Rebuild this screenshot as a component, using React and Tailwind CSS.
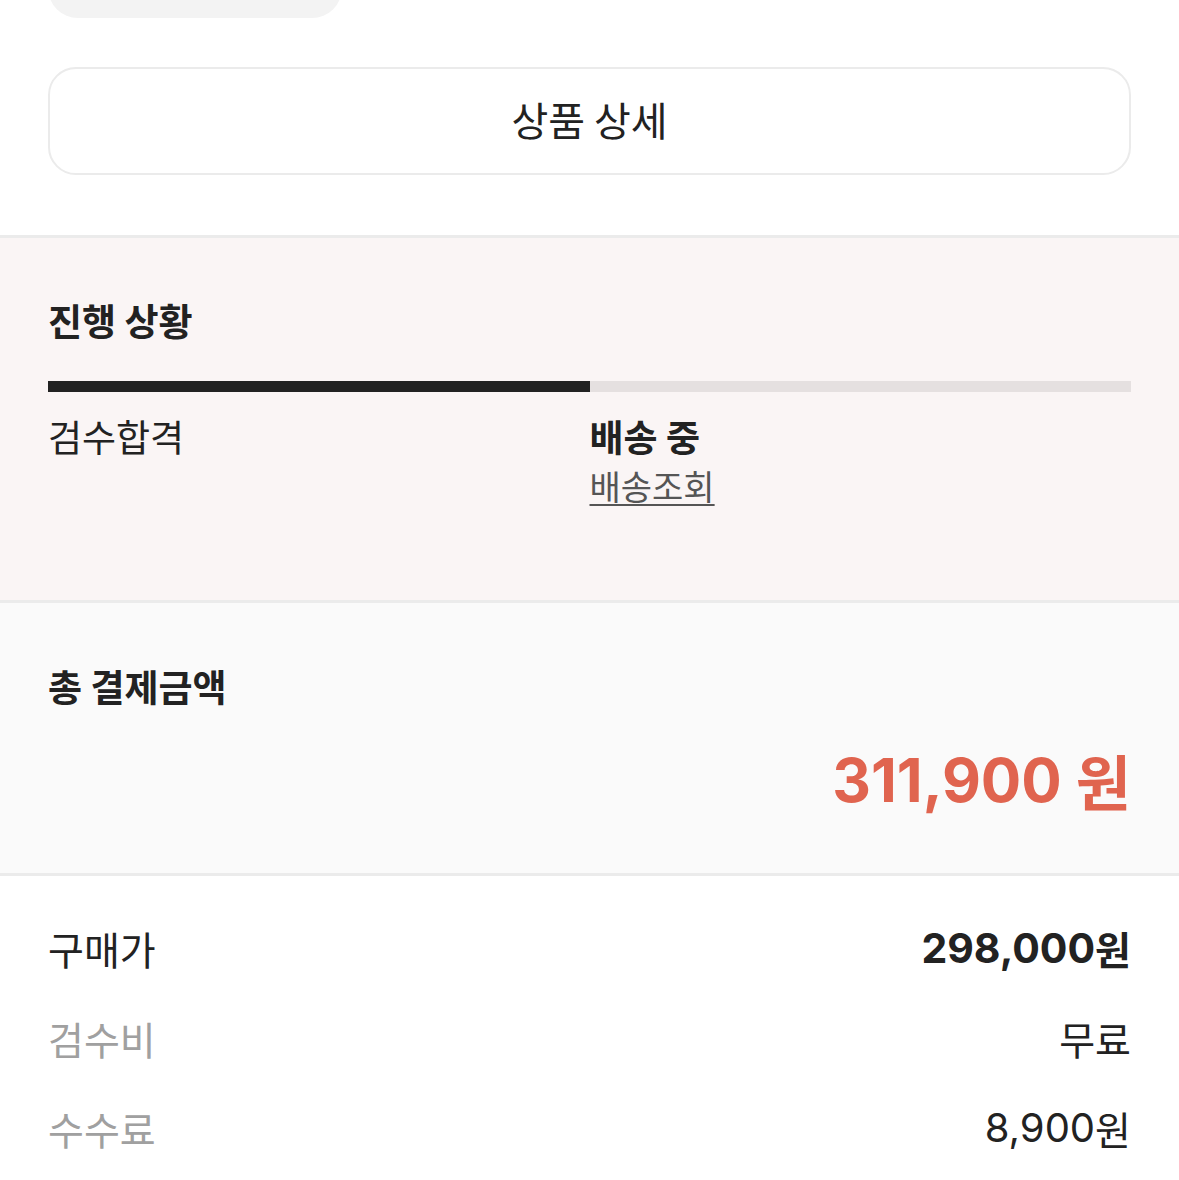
const NUM = { fontFamily: 'Inter, "Noto Sans CJK KR", sans-serif' };

export default function App() {
  return (
    <div
      className="min-h-screen bg-white text-[#222222]"
      style={{ fontFamily: '"Noto Sans CJK KR", "Noto Sans", sans-serif' }}
    >
      {/* TOP PILL (cut off) */}
      <div className="px-12 h-[18px] overflow-hidden flex items-end">
        <div className="w-[294px] h-[60px] shrink-0 rounded-b-[30px] bg-[#f3f3f3]" />
      </div>

      {/* PRODUCT DETAIL BUTTON */}
      <div className="px-12 pt-[49px] pb-[60px]">
        <button className="w-full h-[108px] pb-1 rounded-[28px] border-2 border-[#ebebeb] bg-white text-[40px] text-[#222222]">
          상품 상세
        </button>
      </div>

      {/* PROGRESS */}
      <section className="border-t-[3px] border-[#ebebeb] bg-[#faf5f5] px-12 pt-[58px] pb-[90px]">
        <h2 className="text-[37px] leading-[48px] font-bold">진행 상황</h2>
        <div className="mt-[37px] flex h-[11px]">
          <div className="w-1/2 bg-[#222222]" />
          <div className="w-1/2 bg-[#e5e0e0]" />
        </div>
        <div className="mt-5 flex text-[37px] leading-[49px]">
          <div className="w-1/2">검수합격</div>
          <div className="w-1/2">
            <p className="font-bold">배송 중</p>
            <a className="block h-[49px] text-[34px] text-[#555555] underline underline-offset-[4px] decoration-2">
              배송조회
            </a>
          </div>
        </div>
      </section>

      {/* TOTAL */}
      <section className="border-t-[3px] border-[#ebebeb] bg-[#fafafa] px-12 pt-[59px] pb-[58px]">
        <h2 className="text-[37px] leading-[48px] font-bold">총 결제금액</h2>
        <div className="mt-[35px] h-[70px] flex justify-end items-center text-[60px] font-bold text-[#e0644f]">
          <span className="leading-[70px]" style={NUM}>311,900</span>
          <span className="leading-[70px] ml-[14px]">원</span>
        </div>
      </section>

      {/* BREAKDOWN */}
      <section className="border-t-[3px] border-[#ebebeb] px-12 pt-[48px] pb-10 flex flex-col gap-[42px] text-[39px]">
        <Row label="구매가" num="298,000" unit="원" bold />
        <Row label="검수비" unit="무료" muted />
        <Row label="수수료" num="8,900" unit="원" muted />
      </section>
    </div>
  );
}

function Row({ label, num, unit, bold = false, muted = false }) {
  return (
    <div className="h-[48px] flex justify-between items-center">
      <span className={`leading-[48px] ${muted ? "text-[#a0a0a0]" : "text-[#222222]"}`}>{label}</span>
      <span className={`h-[48px] flex items-center ${bold ? "font-bold" : ""}`}>
        {num && (
          <span className={`leading-[48px] ${bold ? "text-[41px]" : "text-[40px]"}`} style={NUM}>
            {num}
          </span>
        )}
        <span className="leading-[48px]">{unit}</span>
      </span>
    </div>
  );
}
